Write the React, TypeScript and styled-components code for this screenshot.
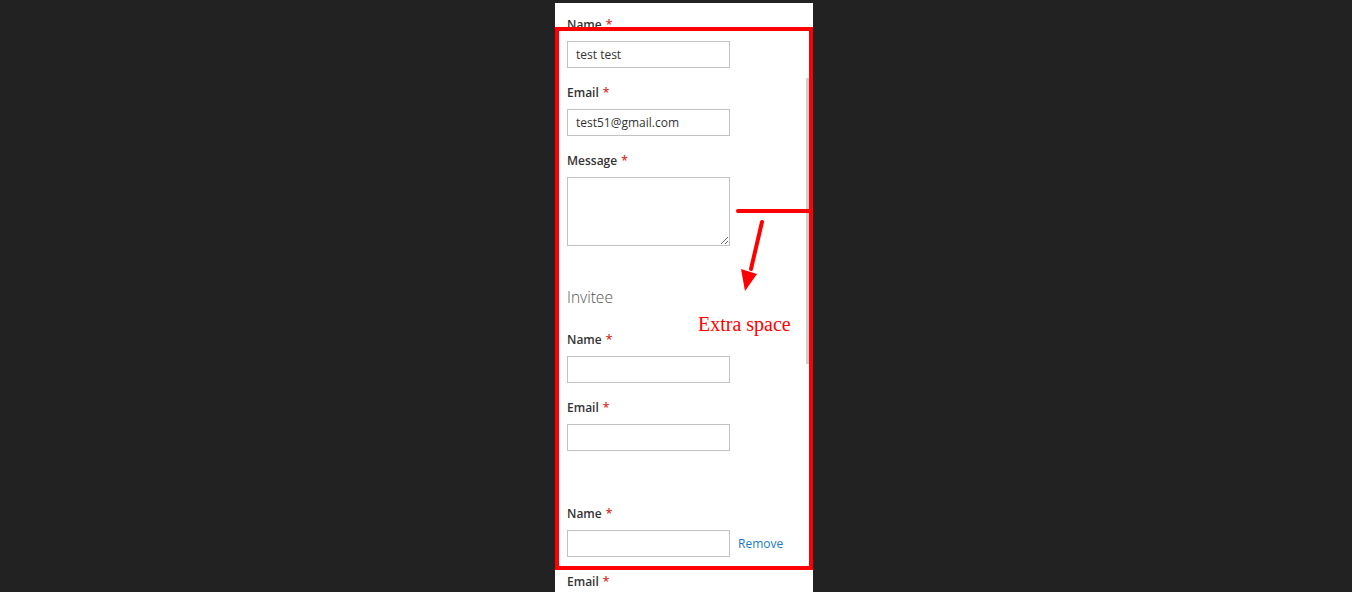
import React from "react";
import styled, { createGlobalStyle } from "styled-components";

const Global = createGlobalStyle`
  html, body { margin: 0; padding: 0; background: #222222; }
  body { font-family: "Open Sans", "Noto Sans", sans-serif; }
  * { box-sizing: border-box; }
`;

const Page = styled.div`
  width: 1352px;
  height: 592px;
  overflow: hidden;
  background: #222222;
  padding-top: 3px;
  padding-left: 555px;
`;

const Panel = styled.div`
  position: relative;
  width: 258px;
  height: 589px;
  background: #ffffff;
  overflow: hidden;
  padding: 13px 12px 0 12px;
`;

const Field = styled.div<{ $extraTop?: number }>`
  margin-top: ${(p) => p.$extraTop ?? 0}px;
  margin-bottom: 16px;
`;

const Label = styled.label`
  display: block;
  font-size: 12px;
  font-weight: 600;
  line-height: 18px;
  color: #333333;
  margin-bottom: 7px;
`;

const Star = styled.span`
  color: #e02b27;
  margin-left: 4px;
`;

const Input = styled.input`
  display: block;
  width: 163px;
  height: 27px;
  border: 1px solid #c2c2c2;
  padding: 0 8px;
  font-family: "Open Sans", sans-serif;
  font-size: 12px;
  color: #333333;
  background: #fff;
  outline: none;
`;

const TextArea = styled.textarea`
  display: block;
  width: 163px;
  height: 69px;
  border: 1px solid #c2c2c2;
  padding: 6px 8px;
  font-family: "Open Sans", sans-serif;
  font-size: 12px;
  resize: both;
  outline: none;
`;

const Legend = styled.div`
  font-size: 15.5px;
  font-weight: 300;
  line-height: 20px;
  color: #555555;
  margin-top: 41px;
  margin-bottom: 24px;
`;

const Row = styled.div`
  display: flex;
  align-items: center;
  gap: 8px;
`;

const RemoveLink = styled.a`
  font-size: 12px;
  color: #1979c3;
  text-decoration: none;
  line-height: 18px;
  cursor: pointer;
`;

const ScrollThumb = styled.div`
  position: absolute;
  left: 251px;
  top: 75px;
  width: 3px;
  height: 286px;
  background: #d0d0d0;
`;

const Highlight = styled.div`
  position: absolute;
  left: 0;
  top: 24px;
  width: 258px;
  height: 543px;
  border: 4px solid #ff0000;
  pointer-events: none;
`;

const ArrowSvg = styled.svg`
  position: absolute;
  left: 0;
  top: 0;
  pointer-events: none;
`;

const Note = styled.div`
  position: absolute;
  left: 143px;
  top: 309px;
  font-family: "Liberation Serif", "Times New Roman", serif;
  font-size: 20px;
  line-height: 24px;
  color: #ff0000;
  white-space: nowrap;
`;

const Req = ({ children }: { children: React.ReactNode }) => (
  <Label>
    {children}
    <Star>*</Star>
  </Label>
);

export default function App() {
  return (
    <>
      <Global />
      <Page>
        <Panel>
          <Field>
            <Req>Name</Req>
            <Input defaultValue="test test" />
          </Field>
          <Field>
            <Req>Email</Req>
            <Input defaultValue="test51@gmail.com" />
          </Field>
          <Field>
            <Req>Message</Req>
            <TextArea />
          </Field>
          <Legend>Invitee</Legend>
          <Field>
            <Req>Name</Req>
            <Input />
          </Field>
          <Field>
            <Req>Email</Req>
            <Input />
          </Field>
          <Field $extraTop={54}>
            <Req>Name</Req>
            <Row>
              <Input />
              <RemoveLink>Remove</RemoveLink>
            </Row>
          </Field>
          <Field>
            <Req>Email</Req>
            <Input />
          </Field>

          <ScrollThumb />
          <Highlight />
          <ArrowSvg width="258" height="589" viewBox="0 0 258 589">
            <line x1="183" y1="208" x2="254" y2="208" stroke="#ff0000" strokeWidth="4" strokeLinecap="round" />
            <line x1="207" y1="219" x2="196" y2="266" stroke="#ff0000" strokeWidth="4" strokeLinecap="round" />
            <polygon points="186,266 202,271 190,288" fill="#ff0000" />
          </ArrowSvg>
          <Note>Extra space</Note>
        </Panel>
      </Page>
    </>
  );
}
